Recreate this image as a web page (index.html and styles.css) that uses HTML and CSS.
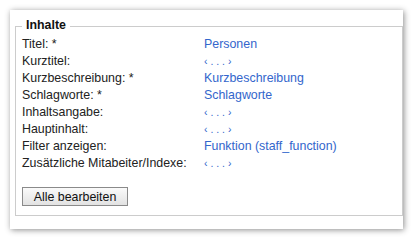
FILE: index.html
```html
<!DOCTYPE html>
<html lang="de">
<head>
<meta charset="utf-8">
<link rel="stylesheet" href="styles.css">
</head>
<body>
<div class="window">
  <section class="group">
    <h2 class="group-title">Inhalte</h2>
    <div class="fields">
      <div class="label">Titel: *</div><a class="value" href="#">Personen</a>
      <div class="label">Kurztitel:</div><a class="value empty" href="#">‹ . . . ›</a>
      <div class="label">Kurzbeschreibung: *</div><a class="value" href="#">Kurzbeschreibung</a>
      <div class="label">Schlagworte: *</div><a class="value" href="#">Schlagworte</a>
      <div class="label">Inhaltsangabe:</div><a class="value empty" href="#">‹ . . . ›</a>
      <div class="label">Hauptinhalt:</div><a class="value empty" href="#">‹ . . . ›</a>
      <div class="label">Filter anzeigen:</div><a class="value" href="#">Funktion (staff_function)</a>
      <div class="label">Zusätzliche Mitabeiter/Indexe:</div><a class="value empty" href="#">‹ . . . ›</a>
    </div>
    <button class="btn" type="button">Alle bearbeiten</button>
  </section>
</div>
</body>
</html>
```
FILE: styles.css
```css
html, body {
  margin: 0;
  padding: 0;
  background: #ffffff;
}
body {
  font-family: "Liberation Sans", Arial, sans-serif;
  font-size: 12.4px;
  color: #222222;
}
.window {
  margin: 10px;
  width: 393px;
  height: 219px;
  box-sizing: border-box;
  background: #ffffff;
  box-shadow: 1px 1px 6px rgba(0, 0, 0, 0.45);
  overflow: hidden;
  padding: 16px 0 0 5px;
}
.group {
  width: 388px;
  box-sizing: border-box;
  border: 1px solid #cccccc;
  padding: 0 6px 9px 6px;
}
.group-title {
  width: fit-content;
  margin: -9px 0 3px 0;
  padding: 0 4px;
  background: #ffffff;
  font-weight: bold;
  font-size: 12.4px;
  line-height: 15px;
  color: #111111;
}
.fields {
  display: grid;
  grid-template-columns: 182px auto;
  grid-auto-rows: 17px;
  line-height: 17px;
}
.label {
  white-space: nowrap;
}
.value {
  color: #3366cc;
  text-decoration: none;
  white-space: nowrap;
}
.value.empty {
  font-size: 10.5px;
}
.btn {
  display: block;
  margin-top: 15px;
  width: 106px;
  height: 19px;
  padding: 0;
  font-family: "Liberation Sans", Arial, sans-serif;
  font-size: 12.4px;
  color: #111111;
  border: 1px solid #8a8a8a;
  border-radius: 0;
  background: linear-gradient(#fafafa, #e2e2e2);
}
```
